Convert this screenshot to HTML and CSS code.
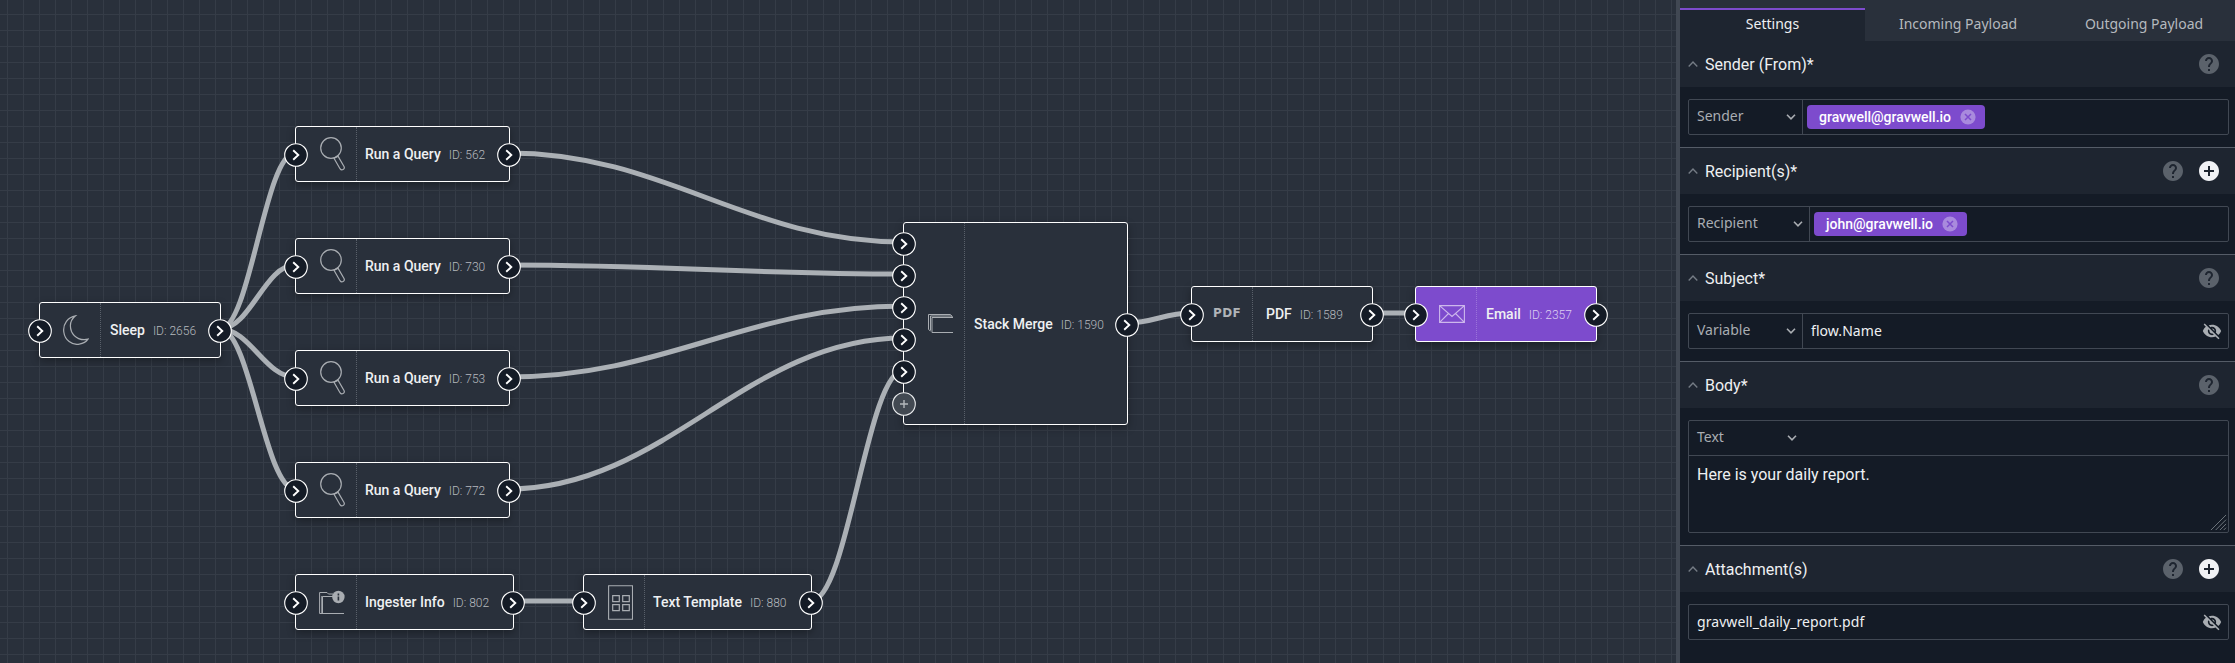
FILE: index.html
```html
<!DOCTYPE html>
<html lang="en">
<head>
<meta charset="utf-8">
<title>Flow editor</title>
<link rel="stylesheet" href="styles.css">
</head>
<body>
<svg class="defs" width="0" height="0" aria-hidden="true">
  <symbol id="i-arrow" viewBox="0 0 24 24"><circle cx="12" cy="12" r="11.3" fill="#141b26" stroke="#fff" stroke-width="1.1"/><path d="M9.2 7.2 14.3 12l-5.1 4.8" fill="none" stroke="#fff" stroke-width="1.9"/></symbol>
  <symbol id="i-add" viewBox="0 0 24 24"><circle cx="12" cy="12" r="11.3" fill="#424952" stroke="#e8eaec" stroke-width="1.1"/><path d="M12 8v8M8 12h8" stroke="#b4b8bc" stroke-width="1.4"/></symbol>
  <symbol id="i-search" viewBox="0 0 25 36"><g fill="none" stroke="#a9adb2" stroke-width="1.2"><circle cx="11" cy="12" r="10.3"/><path d="m14 22.3 4-2.2 6 10.4c1.3 2.6-2.3 4.800-4 2.200z"/></g></symbol>
  <symbol id="i-moon" viewBox="0 0 26 30"><path d="M12.500.8C5 2-.3 9 .8 17c1 8 8 13.500 15.500 12.200 4-.6 7-2.400 8.700-5C19 25.800 11.500 23.500 8.500 16.500 6.300 10.500 8 4.500 12.500.800z" fill="none" stroke="#a9adb2" stroke-width="1.200"/></symbol>
  <symbol id="i-up" viewBox="0 0 10 6"><path d="m.7 5.400 4.300-4.300 4.300 4.300" fill="none" stroke="#757c85" stroke-width="1.400"/></symbol>
  <symbol id="i-down" viewBox="0 0 10 6"><path d="m1 .8 4 4 4-4" fill="none" stroke="#a9adb2" stroke-width="1.600"/></symbol>
  <symbol id="i-help" viewBox="2 2 20 20"><path fill="#5b626b" d="M12 2C6.480 2 2 6.480 2 12s4.480 10 10 10 10-4.480 10-10S17.520 2 12 2zm1 17h-2v-2h2v2zm2.070-7.750-.9.920C13.450 12.900 13 13.500 13 15h-2v-.5c0-1.100.45-2.100 1.170-2.830l1.240-1.260c.37-.36.59-.86.59-1.410 0-1.100-.9-2-2-2s-2 .9-2 2H8c0-2.210 1.790-4 4-4s4 1.790 4 4c0 .88-.36 1.680-.93 2.250z"/></symbol>
  <symbol id="i-plus" viewBox="2 2 20 20"><path fill="#f1f2f5" d="M12 2C6.480 2 2 6.480 2 12s4.480 10 10 10 10-4.480 10-10S17.520 2 12 2zm5 11h-4v4h-2v-4H7v-2h4V7h2v4h4v2z"/></symbol>
  <symbol id="i-eye" viewBox="0 0 24 24"><path fill="#a9adb2" d="M12 7c2.760 0 5 2.240 5 5 0 .65-.13 1.260-.36 1.830l2.920 2.920c1.510-1.260 2.700-2.890 3.430-4.750-1.730-4.390-6-7.500-11-7.500-1.400 0-2.740.25-3.980.7l2.160 2.160C10.740 7.130 11.350 7 12 7zM2 4.270l2.280 2.280.46.46C3.080 8.300 1.780 10.020 1 12c1.730 4.390 6 7.500 11 7.500 1.550 0 3.030-.3 4.380-.84l.42.42L19.730 22 21 20.730 3.270 3 2 4.270zM7.530 9.800l1.550 1.550c-.05.21-.08.430-.08.65 0 1.660 1.340 3 3 3 .22 0 .44-.03.65-.08l1.550 1.550c-.67.33-1.410.53-2.200.53-2.760 0-5-2.240-5-5 0-.79.2-1.530.53-2.200zm4.310-.78 3.150 3.150.02-.16c0-1.660-1.340-3-3-3l-.17.01z"/></symbol>
  <symbol id="i-cancel" viewBox="0 0 16 16"><circle cx="8" cy="8" r="7.600" fill="#a98add"/><path d="m5 5 6 6M11 5l-6 6" stroke="#7d4bcd" stroke-width="1.500"/></symbol>
</svg>
<div class="app">
  <main class="canvas">
    <svg class="wires" viewBox="0 0 1676 663">
      <path d="M220 329C250 329 265 153 295 153"/>
      <path d="M220 329C250 329 265 265 295 265"/>
      <path d="M220 329C250 329 265 377 295 377"/>
      <path d="M220 329C250 329 265 489 295 489"/>
      <path d="M508 153C666 153 746 242 904 242"/>
      <path d="M508 265C666 265 746 274 904 274"/>
      <path d="M508 377C666 377 746 306 904 306"/>
      <path d="M508 489C666 489 746 338 904 338"/>
      <path d="M512 601H583"/>
      <path d="M811 601C848 601 867 370 904 370"/>
      <path d="M1127 323C1153 323 1165 313 1191 313"/>
      <path d="M1371 313H1415"/>
    </svg>

    <div class="node sleep"><div class="glyph"><svg width="26" height="30"><use href="#i-moon"/></svg></div><div class="label"><b>Sleep</b><span>ID: 2656</span></div><div class="ports in"><svg><use href="#i-arrow"/></svg></div><div class="ports out"><svg><use href="#i-arrow"/></svg></div></div>
    <div class="node query q1"><div class="glyph"><svg width="25" height="36"><use href="#i-search"/></svg></div><div class="label"><b>Run a Query</b><span>ID: 562</span></div><div class="ports in"><svg><use href="#i-arrow"/></svg></div><div class="ports out"><svg><use href="#i-arrow"/></svg></div></div>
    <div class="node query q2"><div class="glyph"><svg width="25" height="36"><use href="#i-search"/></svg></div><div class="label"><b>Run a Query</b><span>ID: 730</span></div><div class="ports in"><svg><use href="#i-arrow"/></svg></div><div class="ports out"><svg><use href="#i-arrow"/></svg></div></div>
    <div class="node query q3"><div class="glyph"><svg width="25" height="36"><use href="#i-search"/></svg></div><div class="label"><b>Run a Query</b><span>ID: 753</span></div><div class="ports in"><svg><use href="#i-arrow"/></svg></div><div class="ports out"><svg><use href="#i-arrow"/></svg></div></div>
    <div class="node query q4"><div class="glyph"><svg width="25" height="36"><use href="#i-search"/></svg></div><div class="label"><b>Run a Query</b><span>ID: 772</span></div><div class="ports in"><svg><use href="#i-arrow"/></svg></div><div class="ports out"><svg><use href="#i-arrow"/></svg></div></div>
    <div class="node ingester"><div class="glyph"><svg width="26" height="26" viewBox="0 0 26 26"><path d="M25 24.500H.6V3.500H8l1.500 1.500H14M3.500 24V7.500H14M2.800 24V7" fill="none" stroke="#a9adb2" stroke-width="1"/><circle cx="19.400" cy="8" r="6.200" fill="#a9adb2"/><path d="M19.400 4.600v1.800M19.400 7.400v4" stroke="#29303b" stroke-width="1.600"/></svg></div><div class="label"><b>Ingester Info</b><span>ID: 802</span></div><div class="ports in"><svg><use href="#i-arrow"/></svg></div><div class="ports out"><svg><use href="#i-arrow"/></svg></div></div>
    <div class="node template"><div class="glyph"><svg width="25" height="35" viewBox="0 0 25 35"><path d="M25 .7H.6v33.600H25M24.500 1v33" fill="none" stroke="#a9adb2" stroke-width="1.100"/><path d="M4.700 10.700h6.600v6h-6.600zM14.700 10.700h6.600v6h-6.600zM4.700 19.700h6.600v6h-6.600zM14.700 19.700h6.600v6h-6.600z" fill="none" stroke="#a9adb2" stroke-width="1.200"/></svg></div><div class="label"><b>Text Template</b><span>ID: 880</span></div><div class="ports in"><svg><use href="#i-arrow"/></svg></div><div class="ports out"><svg><use href="#i-arrow"/></svg></div></div>
    <div class="node merge"><div class="glyph"><svg width="25" height="20" viewBox="0 0 25 20"><path d="M25 18.500H4V3.500H25M2.500 16.500V2H24M2.500 17 .5 15.500V.5H22.500L24.500 3" fill="none" stroke="#a9adb2" stroke-width="1"/></svg></div><div class="label"><b>Stack Merge</b><span>ID: 1590</span></div><div class="ports in"><svg><use href="#i-arrow"/></svg><svg><use href="#i-arrow"/></svg><svg><use href="#i-arrow"/></svg><svg><use href="#i-arrow"/></svg><svg><use href="#i-arrow"/></svg><svg><use href="#i-add"/></svg></div><div class="ports out"><svg><use href="#i-arrow"/></svg></div></div>
    <div class="node pdf"><div class="glyph"><i class="pdf-mark">PDF</i></div><div class="label"><b>PDF</b><span>ID: 1589</span></div><div class="ports in"><svg><use href="#i-arrow"/></svg></div><div class="ports out"><svg><use href="#i-arrow"/></svg></div></div>
    <div class="node email"><div class="glyph"><svg width="26" height="18" viewBox="0 0 26 18"><path d="M.6.6h24.800v16.800H.6zL13 11.500 25.400.600M.6 17.400 9.500 8.500M25.400 17.400 16.500 8.500" fill="none" stroke="#cdb8ec" stroke-width="1.100"/></svg></div><div class="label"><b>Email</b><span>ID: 2357</span></div><div class="ports in"><svg><use href="#i-arrow"/></svg></div><div class="ports out"><svg><use href="#i-arrow"/></svg></div></div>
  </main>

  <aside class="panel">
    <nav class="tabs"><div class="tab active">Settings</div><div class="tab">Incoming Payload</div><div class="tab">Outgoing Payload</div></nav>

    <section class="group">
      <header><svg class="caret"><use href="#i-up"/></svg><h2>Sender (From)*</h2><svg class="act"><use href="#i-help"/></svg></header>
      <div class="body"><div class="field"><div class="select">Sender<svg><use href="#i-down"/></svg></div><div class="value chips"><div class="chip sender">gravwell@gravwell.io<svg><use href="#i-cancel"/></svg></div></div></div></div>
    </section>
    <section class="group">
      <header><svg class="caret"><use href="#i-up"/></svg><h2>Recipient(s)*</h2><svg class="act"><use href="#i-help"/></svg><svg class="act"><use href="#i-plus"/></svg></header>
      <div class="body"><div class="field"><div class="select wide">Recipient<svg><use href="#i-down"/></svg></div><div class="value chips"><div class="chip recipient">john@gravwell.io<svg><use href="#i-cancel"/></svg></div></div></div></div>
    </section>
    <section class="group">
      <header><svg class="caret"><use href="#i-up"/></svg><h2>Subject*</h2><svg class="act"><use href="#i-help"/></svg></header>
      <div class="body"><div class="field"><div class="select">Variable<svg><use href="#i-down"/></svg></div><div class="value">flow.Name<svg class="eye"><use href="#i-eye"/></svg></div></div></div>
    </section>
    <section class="group">
      <header><svg class="caret"><use href="#i-up"/></svg><h2>Body*</h2><svg class="act"><use href="#i-help"/></svg></header>
      <div class="body"><div class="field stacked"><div class="select">Text<svg><use href="#i-down"/></svg></div><div class="area"><p>Here is your daily report.</p><svg class="grip" viewBox="0 0 18 18"><path d="M1 17 17 1M6 17 17 6M10.500 17 17 10.500M14.500 17l2.500-2.500" stroke="#737a82" stroke-width="1"/></svg></div></div></div>
    </section>
    <section class="group last">
      <header><svg class="caret"><use href="#i-up"/></svg><h2>Attachment(s)</h2><svg class="act"><use href="#i-help"/></svg><svg class="act"><use href="#i-plus"/></svg></header>
      <div class="body"><div class="field"><div class="value">gravwell_daily_report.pdf<svg class="eye"><use href="#i-eye"/></svg></div></div></div>
    </section>
  </aside>
</div>
</body>
</html>
```
FILE: styles.css
```css
* { box-sizing: border-box; }
body { margin: 0; background: #141b26; color: #eef0f2; font-family: Roboto, "Liberation Sans", sans-serif; font-size: 14px; }
.defs { position: absolute; }
.app { display: flex; width: 2235px; height: 663px; overflow: hidden; }

.canvas {
  position: relative; flex: 1; overflow: hidden;
  background-color: #29303b;
  background-image: linear-gradient(#353c47 1px, transparent 1px), linear-gradient(90deg, #353c47 1px, transparent 1px);
  background-size: 16px 16px;
  background-position: 7px 14px;
}
.wires { position: absolute; inset: 0; width: 1676px; height: 663px; }
.wires path { fill: none; stroke: #abb0b5; stroke-width: 5; }

.node {
  position: absolute; display: flex; height: 56px;
  background: #29303b; border: 1px solid #fff; border-radius: 3px;
  box-shadow: 0 3px 8px rgba(0, 0, 0, .32);
}
.glyph { width: 61px; padding-left: 12px; display: flex; align-items: center; justify-content: center; border-right: 1px dotted #59606a; }
.label { display: flex; align-items: baseline; padding: 19px 0 0 8px; line-height: 17px; white-space: nowrap; }
.label b { font-weight: 500; color: #eff0f2; }
.label span { font-size: 12px; font-weight: 300; color: #b5b9be; margin-left: 8px; }
.ports { position: absolute; top: 16px; display: flex; flex-direction: column; gap: 8px; }
.ports svg { display: block; width: 24px; height: 24px; }
.in { left: -12px; }
.out { right: -12px; }

.sleep { left: 39px; top: 302px; width: 182px; }
.query, .ingester { left: 295px; }
.query { width: 215px; }
.q1 { top: 126px; }
.q2 { top: 238px; }
.q3 { top: 350px; }
.q4 { top: 462px; }
.ingester { top: 574px; width: 219px; }
.template { left: 583px; top: 574px; width: 229px; }
.merge { left: 903px; top: 222px; width: 225px; height: 203px; }
.sleep .label, .merge .label, .email .label { padding-left: 9px; }
.merge .label { padding-top: 93px; }
.merge .in { top: 9px; }
.merge .out { top: 90px; }
.pdf { left: 1191px; top: 286px; width: 182px; }
.pdf .label { padding-left: 13px; }
.pdf .glyph { padding-left: 10px; padding-bottom: 2px; }
.pdf-mark { font: normal bold 12px "DejaVu Sans", sans-serif; color: #b0b4b8; letter-spacing: .3px; }
.email { left: 1415px; top: 286px; width: 182px; background: #7d4bcd; }
.email .glyph { border-color: #9a73da; }
.email .label span { color: #dccff1; }

.panel { width: 559px; border-left: 4px solid #414853; background: #141b26; }
.tabs { display: flex; height: 41px; padding-top: 8px; background: #29303b; }
.tab { flex: none; width: 186px; display: flex; justify-content: center; padding-top: 8px; line-height: 16px; font-family: "Noto Sans", sans-serif; color: #b5b9be; }
.active { width: 185px; border-top: 2px solid #7d4bcd; padding-top: 6px; background: #1e2530; color: #eff0f2; }
.tabs { overflow: hidden; }

.group { border-bottom: 1px solid #555c67; }
.last { border-bottom: 0; }
.group header { height: 46px; display: flex; align-items: center; padding: 0 16px 0 8px; background: #1e2530; }
.caret { width: 10px; height: 6px; margin-right: 7px; }
h2 { flex: 1; margin: 0; font-size: 16px; font-weight: 400; }
.act { width: 20px; height: 20px; margin-left: 16px; }
.body { padding: 12px 6px 12px 8px; }
.field { display: flex; height: 36px; border: 1px solid #414853; border-radius: 2px; font-family: "Noto Sans", sans-serif; line-height: 16px; }
.select { display: flex; align-items: center; width: 114px; padding: 0 6px 2px 8px; border-right: 1px solid #414853; color: #a9adb2; }
.select.wide { width: 121px; }
.select svg { width: 10px; height: 6px; margin: 2px 0 0 auto; }
.value { flex: 1; display: flex; align-items: center; padding: 0 6px 0 8px; letter-spacing: .07px; }
.chips { padding-left: 4px; }
.chip { display: flex; align-items: center; justify-content: space-between; height: 24px; padding: 0 9px 0 12px; border-radius: 4px; background: #7d4bcd; color: #fff; font-family: Roboto, sans-serif; font-weight: 500; letter-spacing: 0; }
.chip svg { width: 16px; height: 16px; }
.sender { width: 178px; }
.recipient { width: 153px; }
.eye { width: 20px; height: 20px; margin-left: auto; }
.stacked { display: block; height: 113px; }
.stacked .select { height: 34px; border-right: 0; }
.area { position: relative; height: 77px; border-top: 1px solid #414853; padding: 9px 8px; }
.area p { margin: 0; font-family: Roboto, sans-serif; font-size: 16px; line-height: 20px; }
.grip { position: absolute; right: 1px; bottom: 1px; width: 17px; height: 17px; }
```
